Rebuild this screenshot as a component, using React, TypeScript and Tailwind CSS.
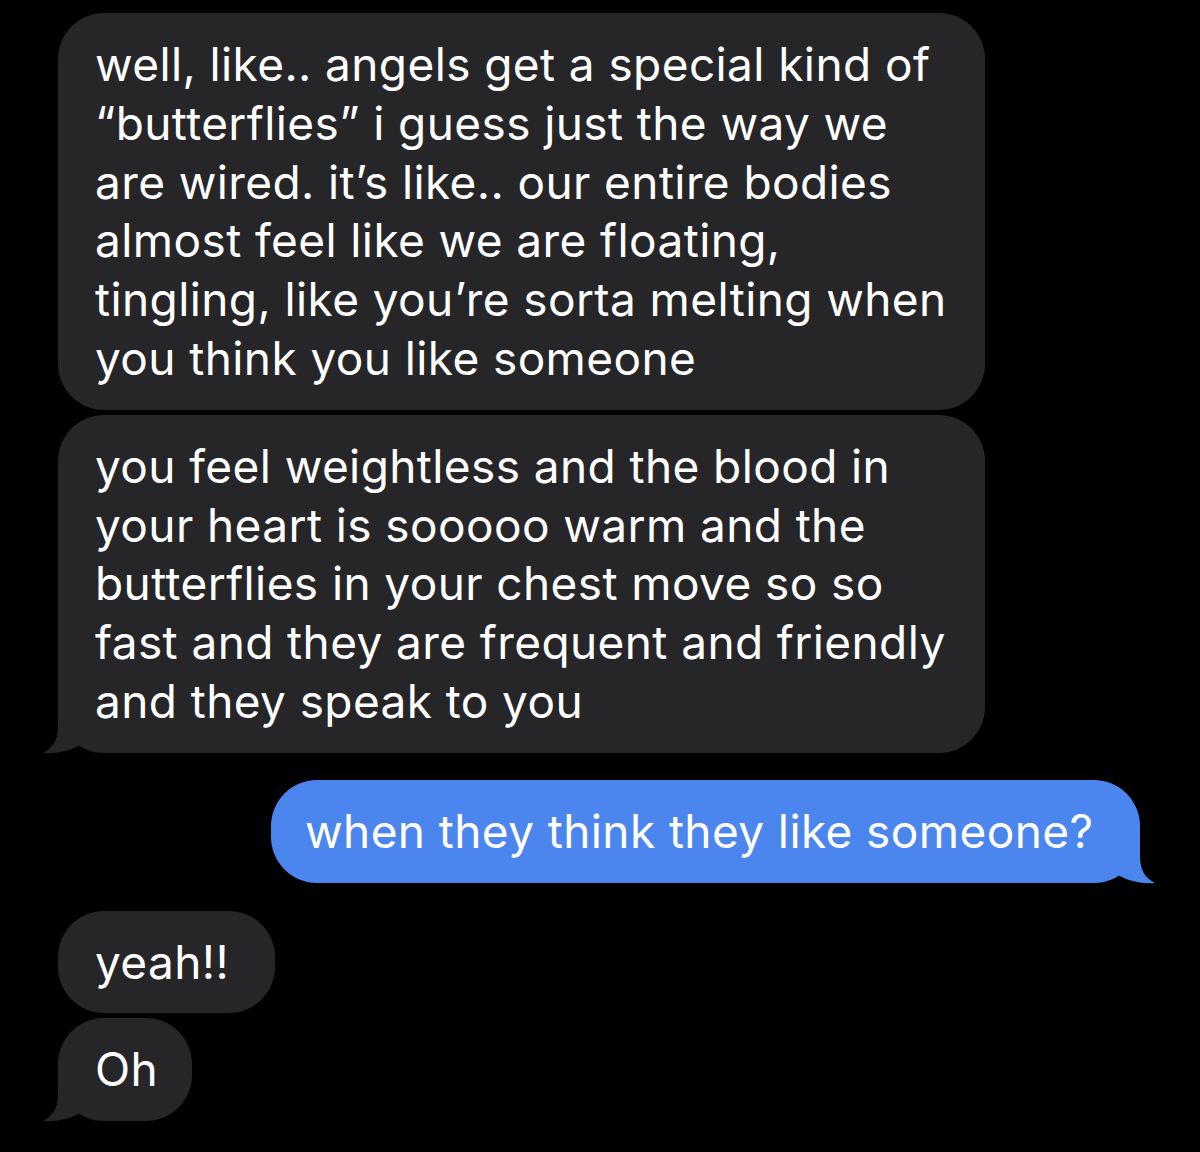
import React from "react";

const grey = "#262628";
const blue = "#4b86ee";

interface BubbleProps {
  lines: string[];
  width: string;
  tail?: boolean;
  sent?: boolean;
  className?: string;
}

const TailLeft = ({ color }: { color: string }) => (
  <svg
    width="40"
    height="52"
    viewBox="0 0 40 52"
    className="absolute -left-[15px] -bottom-[1px]"
  >
    <path
      d="M15 0 L15 25 C15 38 9 47 0 51 C13 52 27 49 37 43 L37 0 Z"
      fill={color}
    />
  </svg>
);

const TailRight = ({ color }: { color: string }) => (
  <svg
    width="40"
    height="52"
    viewBox="0 0 40 52"
    className="absolute -right-[15px] -bottom-[1px]"
  >
    <path
      d="M25 0 L25 25 C25 38 31 47 40 51 C27 52 13 49 3 43 L3 0 Z"
      fill={color}
    />
  </svg>
);

const Bubble = ({ lines, width, tail, sent, className }: BubbleProps) => {
  const color = sent ? blue : grey;
  return (
    <div
      className={`relative rounded-[46px] py-[22px] ${width} ${
        sent ? "bg-[#4b86ee]" : "bg-[#262628]"
      } ${className || "pl-[37px]"}`}
    >
      <p className="text-[46px] leading-[58.8px] text-white whitespace-nowrap tracking-[0.4px]">
        {lines.map((l, i) => (
          <span key={i} className="block">
            {l}
          </span>
        ))}
      </p>
      {tail && (sent ? <TailRight color={color} /> : <TailLeft color={color} />)}
    </div>
  );
};

export default function App() {
  return (
    <div
      className="w-[1200px] h-[1152px] bg-black overflow-hidden flex flex-col pt-[13px]"
      style={{ fontFamily: "Inter, 'Noto Sans', sans-serif" }}
    >
      <div className="flex flex-col gap-[5px] pl-[58px]">
        <Bubble
          width="w-[927px]"
          lines={[
            "well, like.. angels get a special kind of",
            "\u201Cbutterflies\u201D i guess just the way we",
            "are wired. it\u2019s like.. our entire bodies",
            "almost feel like we are floating,",
            "tingling, like you\u2019re sorta melting when",
            "you think you like someone",
          ]}
        />
        <Bubble
          width="w-[927px]"
          tail
          lines={[
            "you feel weightless and the blood in",
            "your heart is sooooo warm and the",
            "butterflies in your chest move so so",
            "fast and they are frequent and friendly",
            "and they speak to you",
          ]}
        />
      </div>

      <div className="flex justify-end pr-[60px] mt-[27px]">
        <Bubble
          width="w-[869px]"
          sent
          tail
          className="pl-[34px]"
          lines={["when they think they like someone?"]}
        />
      </div>

      <div className="flex flex-col items-start gap-[5px] pl-[58px] mt-[28px]">
        <Bubble width="w-[217px]" lines={["yeah!!"]} />
        <Bubble width="w-[134px]" tail lines={["Oh"]} />
      </div>
    </div>
  );
}
